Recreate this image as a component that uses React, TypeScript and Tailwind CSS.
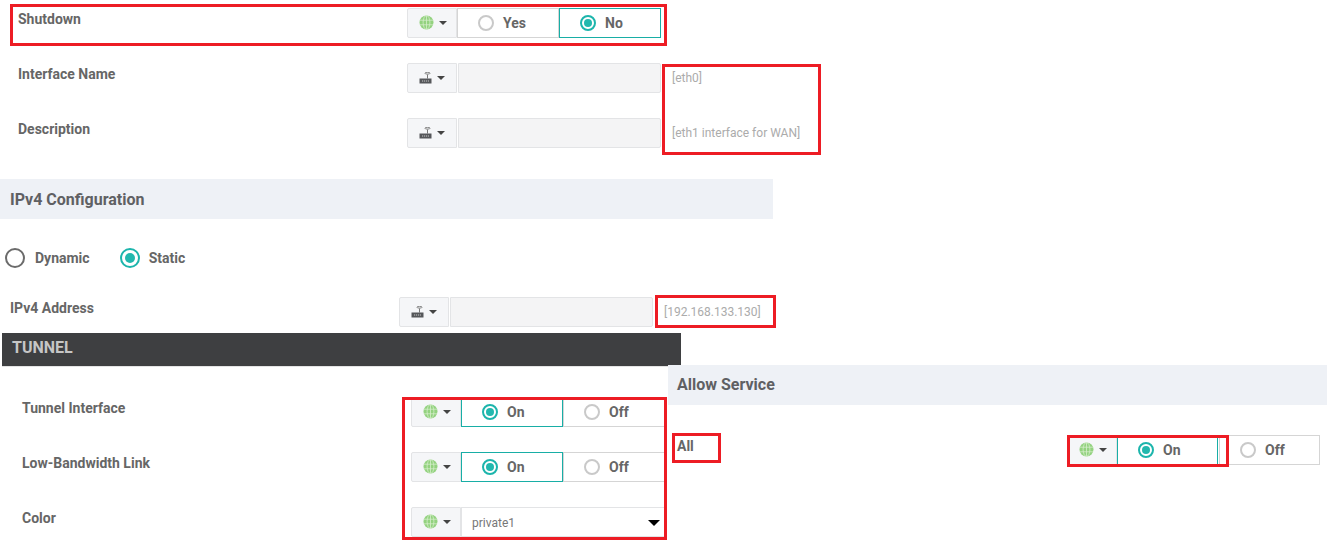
const Globe = () => (
  <svg width="15" height="15" viewBox="0 0 15 15" className="shrink-0 -mt-[2px]">
    <circle cx="7.5" cy="7.5" r="7" fill="#93d27f" />
    <g stroke="#d5eecb" strokeWidth="0.8" fill="none">
      <path d="M1 5.2h13M1 9.8h13M7.5 0.5v14" />
      <ellipse cx="7.5" cy="7.5" rx="3.4" ry="7" />
    </g>
  </svg>
);

const Router = () => (
  <svg width="13" height="12" viewBox="0 0 13 12" className="shrink-0 -mt-[1px]">
    <ellipse cx="8.5" cy="1.2" rx="2.6" ry="0.9" fill="none" stroke="#666" strokeWidth="0.8" />
    <path d="M8.5 2.5v4" stroke="#777" strokeWidth="1" />
    <path d="M0.5 6.5h12v5h-12z" fill="#55575a" />
    <path d="M3 9h7" stroke="#e6e6e6" strokeWidth="0.8" strokeDasharray="1.2 0.8" />
  </svg>
);

const Caret = () => (
  <span className="ml-[5px] w-0 h-0 border-x-[4px] border-x-transparent border-t-[4px] border-t-[#444]" />
);

const Scope = ({ kind = "globe" }: { kind?: "globe" | "router" }) => (
  <div className="w-[50px] h-[30px] shrink-0 pl-[11px] flex items-center bg-[#f5f6f8] border border-[#e3e4e6] rounded-l-[2px]">
    {kind === "globe" ? <Globe /> : <Router />}
    <Caret />
  </div>
);

const Radio = ({ on }: { on: boolean }) => (
  <span
    className={
      on
        ? "w-[16px] h-[16px] shrink-0 rounded-full border-2 border-[#1cb5ac] flex items-center justify-center"
        : "w-[16px] h-[16px] shrink-0 rounded-full border-2 border-[#c9c9c9]"
    }
  >
    {on && <span className="w-[8px] h-[8px] rounded-full bg-[#22b8ae]" />}
  </span>
);

const Opt = ({ text, on, w = "w-[102px]" }: { text: string; on: boolean; w?: string }) => (
  <div
    className={`${w} h-[30px] shrink-0 pl-[20px] flex items-center gap-[9px] bg-white border ${
      on ? "border-[#18aea6]" : "border-[#d5d5d5]"
    }`}
  >
    <Radio on={on} />
    <span className="text-[14px] font-bold text-[#666]">{text}</span>
  </div>
);

const Label = ({ children, cls }: { children: string; cls: string }) => (
  <div className={`${cls} text-[14px] font-bold text-[#666] leading-[22px] shrink-0`}>{children}</div>
);

const InputBox = () => (
  <div className="w-[203px] h-[30px] ml-px shrink-0 bg-[#f4f4f5] border border-[#e3e4e6] rounded-r-[2px]" />
);

const Hint = ({ children, cls }: { children: string; cls: string }) => (
  <div className={`${cls} text-[12px] text-[#ababab] leading-[14px] whitespace-nowrap`}>{children}</div>
);

const SectionBar = ({ children, cls }: { children: string; cls: string }) => (
  <div className={`${cls} h-[40px] bg-[#eef1f6] flex items-center text-[16px] font-bold text-[#5f6063]`}>
    {children}
  </div>
);

const Red = ({ cls }: { cls: string }) => (
  <div className={`absolute border-[3px] border-[#ed1c24] pointer-events-none ${cls}`} />
);

const TunnelRow = ({ label, mt, children }: { label: string; mt: string; children: React.ReactNode }) => (
  <div className={`flex ${mt}`}>
    <Label cls="w-[409px] pl-[20px]">{label}</Label>
    {children}
  </div>
);

export default function App() {
  return (
    <div
      className="relative w-[1333px] h-[544px] overflow-hidden bg-white"
      style={{ fontFamily: "Roboto, sans-serif" }}
    >
      <div className="pt-[8px]">
        <div className="flex">
          <Label cls="w-[407px] pl-[18px]">Shutdown</Label>
          <Scope />
          <Opt text="Yes" on={false} />
          <Opt text="No" on={true} />
        </div>
        <div className="flex mt-[25px]">
          <Label cls="w-[407px] pl-[18px]">Interface Name</Label>
          <Scope kind="router" />
          <InputBox />
          <Hint cls="ml-[11px] pt-[8px]">[eth0]</Hint>
        </div>
        <div className="flex mt-[25px]">
          <Label cls="w-[407px] pl-[18px]">Description</Label>
          <Scope kind="router" />
          <InputBox />
          <Hint cls="ml-[11px] pt-[8px]">[eth1 interface for WAN]</Hint>
        </div>
      </div>

      <SectionBar cls="w-[773px] mt-[31px] pl-[10px] pt-[1px]">IPv4 Configuration</SectionBar>

      <div className="flex items-center h-[20px] mt-[29px] pl-[5px]">
        <span className="w-[20px] h-[20px] rounded-full border-2 border-[#6b6b6b]" />
        <span className="ml-[10px] text-[14px] font-bold text-[#666]">Dynamic</span>
        <span className="ml-[30px] w-[20px] h-[20px] rounded-full border-[2.5px] border-[#1cb5ac] flex items-center justify-center">
          <span className="w-[10px] h-[10px] rounded-full bg-[#22b8ae]" />
        </span>
        <span className="ml-[9px] text-[14px] font-bold text-[#666]">Static</span>
      </div>

      <div className="flex mt-[29px]">
        <Label cls="w-[399px] pl-[10px]">IPv4 Address</Label>
        <Scope kind="router" />
        <InputBox />
        <Hint cls="ml-[11px] pt-[8px]">[192.168.133.130]</Hint>
      </div>

      <div className="flex mt-[6px]">
        <div className="w-[679px] ml-[2px] shrink-0">
          <div className="h-[34px] bg-[#3e3f41] flex items-center pl-[10px] pb-[4px] text-[16px] font-bold text-[#c6c6c6] border-b border-[#e4e4e4]">
            TUNNEL
          </div>
          <TunnelRow label="Tunnel Interface" mt="mt-[30px]">
            <Scope />
            <Opt text="On" on={true} />
            <Opt text="Off" on={false} />
          </TunnelRow>
          <TunnelRow label="Low-Bandwidth Link" mt="mt-[25px]">
            <Scope />
            <Opt text="On" on={true} />
            <Opt text="Off" on={false} />
          </TunnelRow>
          <TunnelRow label="Color" mt="mt-[25px]">
            <Scope />
            <div className="w-[204px] h-[30px] shrink-0 pl-[10px] pr-[4px] pt-[1px] flex items-center justify-between bg-white border border-[#e3e4e6]">
              <span className="text-[12px] text-[#777]">private1</span>
              <span className="w-0 h-0 border-x-[6px] border-x-transparent border-t-[6px] border-t-black" />
            </div>
          </TunnelRow>
        </div>

        <div className="w-[659px] -ml-[13px] mt-[32px] shrink-0">
          <SectionBar cls="w-[659px] pl-[9px] pb-[1px]">Allow Service</SectionBar>
          <div className="flex mt-[30px]">
            <Label cls="w-[399px] pl-[9px]">All</Label>
            <Scope />
            <Opt text="On" on={true} w="w-[101px]" />
            <div className="ml-px">
              <Opt text="Off" on={false} w="w-[101px]" />
            </div>
          </div>
        </div>
      </div>

      <Red cls="left-[10px] top-[4px] w-[657px] h-[42px]" />
      <Red cls="left-[662px] top-[64px] w-[159px] h-[91px]" />
      <Red cls="left-[655px] top-[295px] w-[121px] h-[33px]" />
      <Red cls="left-[402px] top-[397px] w-[265px] h-[143px]" />
      <Red cls="left-[672px] top-[433px] w-[49px] h-[30px]" />
      <Red cls="left-[1067px] top-[435px] w-[162px] h-[32px]" />
    </div>
  );
}
